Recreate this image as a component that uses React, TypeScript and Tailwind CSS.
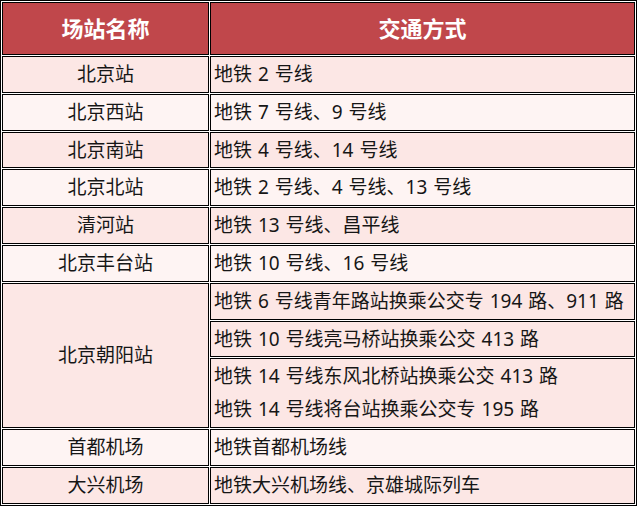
const rows: { name: string; lines: string[][]; tone: 'pink' | 'light' }[] = [
  { name: '北京站', lines: [['地铁 2 号线']], tone: 'pink' },
  { name: '北京西站', lines: [['地铁 7 号线、9 号线']], tone: 'light' },
  { name: '北京南站', lines: [['地铁 4 号线、14 号线']], tone: 'pink' },
  { name: '北京北站', lines: [['地铁 2 号线、4 号线、13 号线']], tone: 'light' },
  { name: '清河站', lines: [['地铁 13 号线、昌平线']], tone: 'pink' },
  { name: '北京丰台站', lines: [['地铁 10 号线、16 号线']], tone: 'light' },
  {
    name: '北京朝阳站',
    lines: [
      ['地铁 6 号线青年路站换乘公交专 194 路、911 路'],
      ['地铁 10 号线亮马桥站换乘公交 413 路'],
      ['地铁 14 号线东风北桥站换乘公交 413 路', '地铁 14 号线将台站换乘公交专 195 路'],
    ],
    tone: 'pink',
  },
  { name: '首都机场', lines: [['地铁首都机场线']], tone: 'light' },
  { name: '大兴机场', lines: [['地铁大兴机场线、京雄城际列车']], tone: 'pink' },
]

const bg = { pink: 'bg-[#fce7e5]', light: 'bg-[#fef4f3]' }

function Cell({ text, tone }: { text: string[]; tone: 'pink' | 'light' }) {
  return (
    <td className={`border border-black px-[3px] py-px text-left align-middle leading-[32.8px] [word-spacing:1px] ${bg[tone]}`}>
      {text.map((t) => (
        <div key={t}>{t}</div>
      ))}
    </td>
  )
}

export default function App() {
  return (
    <div className="bg-white">
      <table
        className="w-[637px] table-fixed border-separate border-spacing-[1px] border border-black text-[19px] text-[#161616]"
        style={{ fontFamily: '"Noto Sans", "Noto Sans CJK SC", sans-serif' }}
      >
        <colgroup>
          <col className="w-[207px]" />
          <col />
        </colgroup>
        <thead>
          <tr>
            <th className="h-[53px] border border-black bg-[#c0474b] text-center text-[22px] font-bold text-white">场站名称</th>
            <th className="h-[53px] border border-black bg-[#c0474b] text-center text-[22px] font-bold text-white">交通方式</th>
          </tr>
        </thead>
        <tbody>
          {rows.map((r) =>
            r.lines.map((line, i) => (
              <tr key={r.name + i}>
                {i === 0 && (
                  <td
                    rowSpan={r.lines.length}
                    className={`border border-black py-px text-center align-middle leading-[32.8px] ${bg[r.tone]}`}
                  >
                    {r.name}
                  </td>
                )}
                <Cell text={line} tone={r.tone} />
              </tr>
            ))
          )}
        </tbody>
      </table>
    </div>
  )
}
